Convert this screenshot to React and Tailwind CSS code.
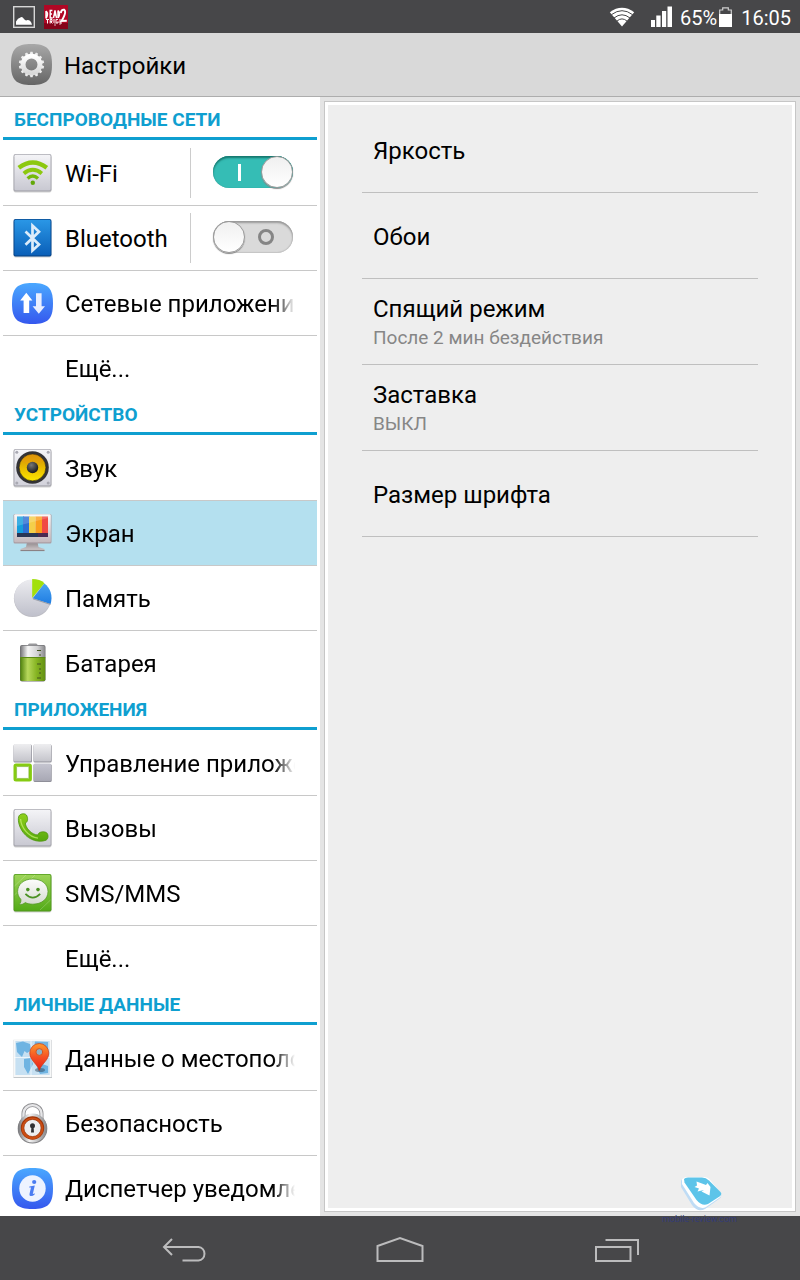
import { useState } from "react";

function Grad({ id, from, to, mid }) {
  return (
    <linearGradient id={id} x1="0" y1="0" x2="0" y2="1">
      <stop offset="0" stopColor={from} />
      {mid && <stop offset="0.5" stopColor={mid} />}
      <stop offset="1" stopColor={to} />
    </linearGradient>
  );
}

function Icon({ children }) {
  return (
    <svg viewBox="0 0 41 41" className="h-[41px] w-[41px] shrink-0" aria-hidden="true">
      {children}
    </svg>
  );
}

/* Light square tile shared by several icons */
function Tile({ id, from = "#f4f4f7", to = "#c9c9d2", edge = "#aaaab2" }) {
  return (
    <>
      <defs>
        <Grad id={id} from={from} to={to} />
      </defs>
      <rect x="1.5" y="2.5" width="38" height="37" rx="2" fill="#000" opacity="0.18" />
      <rect x="1.5" y="1" width="38" height="37.5" rx="2" fill={edge} />
      <rect x="2.5" y="1.8" width="36" height="35.5" rx="1.4" fill={`url(#${id})`} />
    </>
  );
}

const SQUIRCLE = "M20.5 0 C36 0 41 5 41 20.5 S36 41 20.5 41 S0 36 0 20.5 S5 0 20.5 0Z";

function WifiIcon() {
  return (
    <Icon>
      <Tile id="wifiTile" />
      <g fill="none" stroke="#8cc80f" strokeLinecap="butt">
        <path d="M6.8 14.8 Q20.8 4.4 34.8 14.8" strokeWidth="4.4" />
        <path d="M11.8 20.4 Q20.8 13 29.8 20.4" strokeWidth="3.9" />
        <path d="M15.6 25.4 Q20.8 20.8 26 25.4" strokeWidth="3.4" stroke="#74b90c" />
      </g>
      <circle cx="20.8" cy="29.8" r="2.2" fill="#63a80a" />
    </Icon>
  );
}

function BluetoothIcon() {
  return (
    <Icon>
      <Tile id="btTile" from="#2a97e6" to="#0a5fb8" edge="#07488f" />
      <path
        d="M13.5 13.5 L27 26.5 L20.5 32.4 V7.6 L27 13.8 L13.5 26.8"
        fill="none"
        stroke="#dcecfa"
        strokeWidth="2.7"
      />
    </Icon>
  );
}

function NetworkIcon() {
  return (
    <Icon>
      <defs>
        <Grad id="netBg" from="#4aa8ff" to="#3558ee" />
      </defs>
      <path d={SQUIRCLE} fill="url(#netBg)" />
      <path d="M14.3 9.8 L20.4 17.4 H17.2 V30 H11.6 V17.4 H8.2Z" fill="#fff" />
      <path d="M24 10.3 H29.6 V23.2 H33 L26.8 30.8 L20.6 23.2 H24Z" fill="#e9efff" />
    </Icon>
  );
}

function SoundIcon() {
  return (
    <Icon>
      <defs>
        <Grad id="cone" from="#cf8d05" mid="#e8ba00" to="#fbe600" />
        <radialGradient id="cap" cx="0.4" cy="0.3" r="0.8">
          <stop offset="0" stopColor="#777" />
          <stop offset="1" stopColor="#0c0c0c" />
        </radialGradient>
      </defs>
      <Tile id="sndTile" from="#f5f5f8" to="#d2d2db" />
      <g fill="#a9a9b2">
        <circle cx="4.8" cy="4.2" r="1.5" />
        <circle cx="36.2" cy="4.2" r="1.5" />
        <circle cx="4.8" cy="35" r="1.5" />
        <circle cx="36.2" cy="35" r="1.5" />
      </g>
      <circle cx="20.5" cy="19.5" r="16.3" fill="#333336" />
      <circle cx="20.5" cy="19.5" r="13.4" fill="url(#cone)" stroke="#1b1b1b" strokeWidth="0.6" />
      <path d="M20.5 19.5 L9.4 12.4 A13.2 13.2 0 0 1 31.6 12.4Z" fill="#ef9d10" opacity="0.4" />
      <circle cx="20.5" cy="19.5" r="5.7" fill="url(#cap)" />
    </Icon>
  );
}

function ScreenIcon() {
  return (
    <Icon>
      <defs>
        <Grad id="frame" from="#fafafb" to="#c4b9bd" />
        <Grad id="foot" from="#8d8588" to="#d5ced0" />
        <clipPath id="panel">
          <path d="M5 3.5 H36 V24 H5Z" />
        </clipPath>
      </defs>
      <path d="M15 29 H25.5 L26.5 34 L32.5 36 V38 H8.5 V36 L14 34Z" fill="url(#foot)" />
      <path d="M8.5 37.5 H32.5" stroke="#8b8285" strokeWidth="1.2" />
      <rect x="1.5" y="1" width="38" height="29.5" rx="1.5" fill="#aa9da3" />
      <rect x="2.2" y="1.2" width="36.6" height="28" rx="1.2" fill="url(#frame)" />
      <g clipPath="url(#panel)">
        <rect x="5" y="3" width="7" height="22" fill="#179edc" />
        <rect x="11" y="3" width="6.5" height="22" fill="#2f70d2" />
        <rect x="17" y="3" width="6.5" height="22" fill="#f4cf49" />
        <rect x="23.5" y="3" width="6.5" height="22" fill="#fa9d1d" />
        <rect x="30" y="3" width="7" height="22" fill="#f04a43" />
        <path d="M5 3 H36 V5 L5 13Z" fill="#fff" opacity="0.18" />
        <rect x="5" y="20" width="31" height="5" fill="#293554" />
        <rect x="26" y="20" width="10" height="5" fill="#5a2850" opacity="0.7" />
      </g>
    </Icon>
  );
}

function MemoryIcon() {
  return (
    <Icon>
      <defs>
        <Grad id="pie" from="#ececf0" to="#bfc0cb" />
        <Grad id="slice" from="#4aa3f2" to="#1f7de2" />
      </defs>
      <circle cx="20.5" cy="20.5" r="18.6" fill="#8f909b" opacity="0.6" />
      <circle cx="20.5" cy="19.8" r="18.4" fill="url(#pie)" />
      <path d="M20.2 20 V1 Q28 1 32.5 5.2Z" fill="#a2e00d" />
      <path d="M20.8 20.3 L32.3 5.6 C38.5 10 41 18 38.6 26Z" fill="url(#slice)" />
      <path d="M20.8 20.8 L38.6 26.5" stroke="#8c909c" strokeWidth="0.8" />
    </Icon>
  );
}

function BatteryIcon() {
  return (
    <Icon>
      <defs>
        <linearGradient id="cellTop" x1="0" x2="1">
          <stop offset="0" stopColor="#77777a" />
          <stop offset="0.3" stopColor="#f6f6f6" />
          <stop offset="0.7" stopColor="#d0d0d2" />
          <stop offset="1" stopColor="#8b8b8e" />
        </linearGradient>
        <linearGradient id="cell" x1="0" x2="1">
          <stop offset="0" stopColor="#4c7f0b" />
          <stop offset="0.3" stopColor="#b7d85c" />
          <stop offset="0.65" stopColor="#86b422" />
          <stop offset="1" stopColor="#628f12" />
        </linearGradient>
      </defs>
      <rect x="16" y="0.5" width="9.5" height="4" rx="1.5" fill="#99999c" />
      <rect x="8" y="2" width="25.5" height="36.5" rx="2" fill="#737377" />
      <rect x="8.6" y="2.8" width="24.3" height="14" rx="1.5" fill="url(#cellTop)" />
      <path d="M8.2 14.5 H33.3 V36.5 Q33.3 38 31.5 38 H10 Q8.2 38 8.2 36.5Z" fill="url(#cell)" />
      <path d="M8.2 14.5 H33.3" stroke="#5c8a15" />
      <path d="M25 7.5 H29 M27 12 H29 M25 21 H29 M27 26 H29 M27 30 H29 M25 35 H29" stroke="#42551f" strokeWidth="1" />
    </Icon>
  );
}

function AppsIcon() {
  return (
    <Icon>
      <defs>
        <Grad id="appA" from="#eeeef0" to="#c4c4cb" />
        <Grad id="appB" from="#c5c5d0" to="#a8a8b4" />
      </defs>
      <g fill="#8f8f99">
        <rect x="1.5" y="1.6" width="18.5" height="18" rx="1.5" />
        <rect x="21.5" y="1.6" width="18.2" height="18" rx="1.5" />
        <rect x="21.5" y="21" width="18.2" height="18" rx="1.5" />
      </g>
      <rect x="1.5" y="1" width="17.8" height="17.5" rx="1.5" fill="url(#appA)" />
      <rect x="21.5" y="1" width="17.6" height="17.5" rx="1.5" fill="url(#appA)" />
      <rect x="21.5" y="20.6" width="17.6" height="17.4" rx="1.5" fill="url(#appB)" />
      <rect x="3" y="22" width="15.4" height="15" rx="1" fill="#fff" stroke="#86cb12" strokeWidth="3" />
      <rect x="4.6" y="23.6" width="12.2" height="11.8" rx="0.8" fill="none" stroke="#6ca71b" strokeWidth="0.5" />
    </Icon>
  );
}

function PhoneIcon() {
  return (
    <Icon>
      <defs>
        <Grad id="handset" from="#8fd01b" to="#56a80d" />
      </defs>
      <Tile id="phoneTile" />
      <path
        d="M6.6 9 C7.2 5.6 12.6 4.8 14.4 7 C16.2 9.8 16 14 13.4 15 C13.2 19.6 19.8 27 26 27 C26.4 23.8 31.4 23 34.4 24.6 C36.8 26.6 36.4 31 34 32.2 C27.4 34.8 17.4 32.7 11.3 24.6 C7 18.9 5.8 12.8 6.6 9Z"
        fill="url(#handset)"
        stroke="#4c930c"
        strokeWidth="0.8"
      />
      <path d="M8.6 11 C9 19 16 29 26 30.2" fill="none" stroke="#c6f06e" strokeWidth="1.3" opacity="0.75" />
    </Icon>
  );
}

function SmsIcon() {
  return (
    <Icon>
      <defs>
        <Grad id="bubble" from="#fdfdfc" to="#d5dbd0" />
      </defs>
      <Tile id="smsTile" from="#9cd457" to="#54ab18" edge="#529c1c" />
      <path d="M2.5 13 L14 2 M2.5 22 L23 2 M28 37 L38.5 27" stroke="#fff" opacity="0.2" />
      <path
        d="M20.8 6 C30 6 36 11.4 36 18.6 C36 26 29.8 31.2 20.8 31.2 C18 31.2 15.4 30.7 13.3 29.6 C11.7 31 9.6 31.8 7 31.6 C8.7 30 9.2 28.2 8.8 26.3 C6.8 24.2 5.6 21.6 5.6 18.6 C5.6 11.4 11.6 6 20.8 6Z"
        fill="url(#bubble)"
        stroke="#579b28"
        strokeWidth="0.8"
      />
      <circle cx="15.8" cy="16.6" r="1.8" fill="#4a9222" />
      <circle cx="26" cy="16.6" r="1.8" fill="#4a9222" />
      <path d="M13.4 20.8 Q20.8 28.4 28.2 20.8" fill="none" stroke="#4a9222" strokeWidth="1.7" />
    </Icon>
  );
}

function LocationIcon() {
  return (
    <Icon>
      <defs>
        <Grad id="pin" from="#ff9a2b" mid="#f55125" to="#e51f18" />
      </defs>
      <rect x="1.5" y="2" width="38.5" height="38" fill="#c3c7ca" />
      <rect x="1.5" y="1" width="38" height="38" fill="#f7f8f8" />
      <rect x="3.4" y="3" width="34.3" height="34" fill="#c6e0f2" />
      <path d="M4 5 L11 3.5 L18 6 L20 12 L15 15 L12.5 13 L10 19 L5 14Z M12 21 L19 20 L21 26 L16 36 L12 29Z M23 3.5 L36 4 V17 L29 14 L25 17 L22 10Z M25 30 L30 26 L36 28 V35 L28 36Z" fill="#6fb4e2" />
      <path d="M19 2 V38 M2 19.5 H38" stroke="#fff" strokeWidth="1" opacity="0.65" />
      <ellipse cx="28" cy="32" rx="5" ry="2" fill="#2b4459" opacity="0.5" />
      <path d="M27.3 32.5 C25.4 25.8 17.8 22.5 17.8 15 A9.5 9.5 0 0 1 36.8 15 C36.8 22.5 29.2 25.8 27.3 32.5Z" fill="url(#pin)" stroke="#c93a14" strokeWidth="0.7" />
      <circle cx="27.3" cy="14" r="3.4" fill="#8ab2c9" stroke="#d9531c" />
    </Icon>
  );
}

function LockIcon() {
  return (
    <Icon>
      <defs>
        <linearGradient id="steel" x1="0" x2="1">
          <stop offset="0" stopColor="#77777a" />
          <stop offset="0.4" stopColor="#f4f4f4" />
          <stop offset="1" stopColor="#858588" />
        </linearGradient>
      </defs>
      <path d="M11.5 17 V10.5 A9 8.4 0 0 1 29.5 10.5 V17" fill="none" stroke="#8e8e91" strokeWidth="4" />
      <path d="M11.5 17 V10.5 A9 8.4 0 0 1 29.5 10.5 V17" fill="none" stroke="#e6e6e8" strokeWidth="2.4" />
      <circle cx="20.5" cy="25.8" r="14.8" fill="#808083" />
      <circle cx="20.5" cy="25" r="14.5" fill="url(#steel)" />
      <circle cx="20.5" cy="25" r="11.7" fill="#9d3509" />
      <circle cx="20.5" cy="25.4" r="10.8" fill="#cd4d12" />
      <circle cx="20.5" cy="25" r="8.6" fill="#eeeef0" stroke="#97370b" strokeWidth="0.7" />
      <circle cx="20.5" cy="22.8" r="2.5" fill="#303033" />
      <path d="M19.5 23 H21.5 L22 29.4 H19Z" fill="#303033" />
    </Icon>
  );
}

function InfoIcon() {
  return (
    <Icon>
      <defs>
        <Grad id="infoBg" from="#4aa8ff" to="#3558ee" />
      </defs>
      <path d={SQUIRCLE} fill="url(#infoBg)" />
      <circle cx="20.5" cy="20.5" r="13.2" fill="#edf3ff" />
      <circle cx="22.2" cy="14" r="2.1" fill="#4a7cf2" />
      <path d="M17.4 18.6 L22.8 17.6 L20.8 26 Q21.8 26 22.8 25.2 L22.6 26.4 Q20.6 28.4 18.4 28 Q17 27.6 17.6 25.4 L19 19.6 L17.2 19.6Z" fill="#4a7cf2" />
    </Icon>
  );
}

function GearIcon() {
  const teeth = Array.from({ length: 14 }, (_, i) => i * (360 / 14));
  return (
    <Icon>
      <defs>
        <Grad id="gearBg" from="#a8a8a8" to="#656565" />
        <Grad id="gearFg" from="#ffffff" to="#d9d9d9" />
      </defs>
      <path d={SQUIRCLE} fill="url(#gearBg)" />
      {teeth.map((a) => (
        <path key={a} d="M18.4 12 L19.4 7.8 H21.6 L22.6 12Z" fill="#ededed" transform={`rotate(${a} 20.5 20.5)`} />
      ))}
      <circle cx="20.5" cy="20.5" r="8.4" fill="none" stroke="url(#gearFg)" strokeWidth="4.8" />
    </Icon>
  );
}

const sections = [
  {
    title: "БЕСПРОВОДНЫЕ СЕТИ",
    items: [
      { label: "Wi-Fi", icon: WifiIcon, toggle: true, on: true },
      { label: "Bluetooth", icon: BluetoothIcon, toggle: true, on: false },
      { label: "Сетевые приложения", icon: NetworkIcon },
      { label: "Ещё..." },
    ],
  },
  {
    title: "УСТРОЙСТВО",
    items: [
      { label: "Звук", icon: SoundIcon },
      { label: "Экран", icon: ScreenIcon, active: true },
      { label: "Память", icon: MemoryIcon },
      { label: "Батарея", icon: BatteryIcon },
    ],
  },
  {
    title: "ПРИЛОЖЕНИЯ",
    items: [
      { label: "Управление приложениями", icon: AppsIcon },
      { label: "Вызовы", icon: PhoneIcon },
      { label: "SMS/MMS", icon: SmsIcon },
      { label: "Ещё..." },
    ],
  },
  {
    title: "ЛИЧНЫЕ ДАННЫЕ",
    items: [
      { label: "Данные о местоположении", icon: LocationIcon },
      { label: "Безопасность", icon: LockIcon },
      { label: "Диспетчер уведомлений", icon: InfoIcon },
    ],
  },
];

const options = [
  { title: "Яркость" },
  { title: "Обои" },
  { title: "Спящий режим", summary: "После 2 мин бездействия" },
  { title: "Заставка", summary: "ВЫКЛ" },
  { title: "Размер шрифта" },
];

function Toggle({ label, initial }) {
  const [on, setOn] = useState(initial);
  return (
    <div className="flex h-[50px] w-[127px] shrink-0 items-center border-l border-[#cccccc] pl-[22px]">
      <label className="relative mb-0.5 flex h-8 w-20 cursor-pointer items-center">
        <input
          type="checkbox"
          role="switch"
          aria-label={label}
          checked={on}
          onChange={() => setOn(!on)}
          className="peer h-8 w-20 cursor-pointer appearance-none rounded-full bg-[#dadada] shadow-[inset_0_2px_2px_#9a9a9a,inset_0_0_1px_1px_#c4c4c4] checked:bg-[#35bdb5] checked:shadow-[inset_0_2px_2px_#16786f,inset_0_0_1px_#258f88]"
        />
        <span className="absolute left-0 h-8 w-8 rounded-full border border-[#9a9a9a] bg-linear-to-b from-[#f0f0f0] to-white shadow-[0_1px_1px_#888888] peer-checked:left-12" />
        {on ? (
          <span className="absolute left-[25px] h-[17px] w-[3px] bg-white" />
        ) : (
          <span className="absolute left-[45px] h-4 w-4 rounded-full border-3 border-[#858585]" />
        )}
      </label>
    </div>
  );
}

function MenuRow({ item }) {
  const RowIcon = item.icon;
  return (
    <li className={item.active ? "flex items-center bg-[#b4e0ef]" : "flex items-center"}>
      <a
        href="#"
        aria-current={item.active ? "page" : undefined}
        className="flex h-16 min-w-0 flex-1 items-center gap-3 pl-[9px]"
      >
        <span className="flex w-[41px] shrink-0">{RowIcon && <RowIcon />}</span>
        <span
          className={
            item.toggle
              ? "pt-0.5 whitespace-nowrap"
              : "mr-[22px] flex-1 overflow-hidden pt-0.5 whitespace-nowrap mask-[linear-gradient(to_right,black_calc(100%-22px),transparent)]"
          }
        >
          {item.label}
        </span>
      </a>
      {item.toggle && <Toggle label={item.label} initial={item.on} />}
    </li>
  );
}

function StatusBar() {
  return (
    <div className="flex h-[33px] shrink-0 items-center bg-[#474749] pr-[9px] pl-[13px] text-[20px] text-white">
      <svg viewBox="0 0 22 22" className="h-[22px] w-[22px]" aria-hidden="true">
        <rect x="0.7" y="0.7" width="20.6" height="20.6" fill="none" stroke="#d6d6d6" strokeWidth="1.4" />
        <path d="M3 18.8 V15.5 Q5 12 7 11.8 Q9 9.5 11 13 Q12.5 15.2 14.5 14 Q18 14 19 18.8Z" fill="#fff" />
      </svg>
      <svg viewBox="0 0 24 24" className="ml-[9px] h-6 w-6" aria-hidden="true">
        <rect width="24" height="24" fill="#b00725" />
        <rect y="18" width="24" height="6" fill="#85041a" />
        <g fill="none" stroke="#fff" strokeWidth="1.4">
          <path d="M2 6 V13.5 M2 6 Q5 8 2.2 13.5 M8.4 5.5 H6.2 V13 H8.6 M6 9 H8 M9.5 13 L11 5.5 L12.5 13 M10 10 H12 M14 5.5 V13 M14 5.5 Q17 8 14.2 13" />
          <path d="M2 14.5 H5 M3.5 14.5 V18.5 M6.2 18.5 V14.5 H8 V16.5 H6.5 L8.4 18.5 M10 14 V18 M14 14.4 H12 V18 H14 V16.3 M16 14 V18 H18" strokeWidth="1" />
          <path d="M16.8 8 Q17.5 4.2 20.2 4.8 Q23 7 17.5 16 L22.8 15.8" strokeWidth="2" />
          <path d="M11 18 V21 M16 18 V20" strokeWidth="0.7" />
        </g>
      </svg>
      <div className="ml-auto flex items-center">
        <svg viewBox="0 0 26 20" className="h-5 w-[26px]" aria-hidden="true">
          <path d="M0.8 5.2 Q13 -3.6 25.2 5.2 L13 19.4Z" fill="#fff" />
          <g fill="none" stroke="#474749" strokeWidth="1">
            <path d="M2.5 7.6 Q13 -0.2 23.5 7.6" />
            <path d="M5 11 Q13 4.6 21 11" />
            <path d="M7.8 14.2 Q13 9.6 18.2 14.2" />
          </g>
        </svg>
        <svg viewBox="0 0 21 21" className="ml-4 h-[21px] w-[21px]" aria-hidden="true">
          <path d="M0 14 H4 V21 H0Z M5.3 9.5 H9.6 V21 H5.3Z M11 5 H15.2 V21 H11Z M16.5 0.5 H21 V21 H16.5Z" fill="#fff" />
        </svg>
        <span className="ml-2 pt-0.5">65%</span>
        <svg viewBox="0 0 13 20" className="ml-0.5 h-5 w-[13px]" aria-hidden="true">
          <path d="M0.7 7 V3 H3.7 V0.8 H9.3 V3 H12.3 V7" fill="none" stroke="#cfcfcf" strokeWidth="1.2" />
          <rect y="7" width="13" height="13" fill="#fff" />
        </svg>
        <span className="ml-[9px] pt-0.5">16:05</span>
      </div>
    </div>
  );
}

function NavBar() {
  const cls = "flex h-16 w-[216px] items-center justify-center pt-1";
  const svg = "h-7 w-[50px] fill-none stroke-[#bcbcbd] stroke-2";
  return (
    <nav className="flex shrink-0 justify-center bg-[#474749]">
      <button type="button" aria-label="Назад" className={cls}>
        <svg viewBox="0 0 50 28" className={svg}>
          <path d="M13 3 L5 11 L13 19 M5 11 H39.5 A6.8 6.8 0 0 1 39.5 24.5 H23.5" />
        </svg>
      </button>
      <button type="button" aria-label="Домой" className={cls}>
        <svg viewBox="0 0 50 28" className={svg}>
          <path d="M2.5 25 V10 L25 2 L47.5 10 V25Z" />
        </svg>
      </button>
      <button type="button" aria-label="Недавние приложения" className={cls}>
        <svg viewBox="0 0 50 28" className={svg}>
          <path d="M5 11 H39.5 V25 H5Z M14.5 4 H47 V19" />
        </svg>
      </button>
    </nav>
  );
}

export default function App() {
  return (
    <div className="relative flex h-screen flex-col overflow-hidden bg-white font-[Roboto,sans-serif] text-[24px] leading-8 text-black">
      <StatusBar />
      <header className="flex h-16 shrink-0 items-center gap-3 border-b border-[#adadad] bg-[#d9d9d9] pl-[11px]">
        <GearIcon />
        <h1 className="pt-0.5">Настройки</h1>
      </header>
      <div className="flex min-h-0 flex-1">
        <aside className="w-2/5 shrink-0 overflow-hidden px-[3px] pt-2">
          {sections.map((s) => (
            <section key={s.title}>
              <h2 className="mb-px h-[35px] border-b-3 border-[#0f9fd0] pl-[11px] text-[19px] leading-[30px] font-bold text-[#0f9fd0]">
                {s.title}
              </h2>
              <ul className="divide-y divide-[#c8c8c8]">
                {s.items.map((item) => (
                  <MenuRow key={item.label} item={item} />
                ))}
              </ul>
            </section>
          ))}
        </aside>
        <main className="flex min-w-0 flex-1 bg-[#e4e4e4] p-1">
          <div className="flex-1 border border-[#c6c6c6] bg-[#eeeeee]">
            <div className="h-full border-3 border-white px-[34px] pt-0.5">
              {options.map((o) => (
                <button
                  key={o.title}
                  type="button"
                  className={
                    o.summary
                      ? "flex h-[86px] w-full flex-col items-start justify-center border-b border-[#bfbfbf] pl-[11px] text-left"
                      : "flex h-[86px] w-full items-center border-b border-[#bfbfbf] pt-0.5 pl-[11px] text-left"
                  }
                >
                  <span>{o.title}</span>
                  {o.summary && <span className="text-[19px] leading-[26px] text-[#868686]">{o.summary}</span>}
                </button>
              ))}
            </div>
          </div>
        </main>
      </div>
      <NavBar />
      <div className="pointer-events-none absolute right-[63px] bottom-[53px] flex flex-col items-center">
        <svg viewBox="0 0 42 34" className="ml-1 h-[34px] w-[42px]" aria-hidden="true">
          <path d="M1 4 Q2 1 6 1 H24 Q28 1 31 5 L41 17 Q42 20 39 22 L25 32 Q18 36 12 28 L1 10Z" fill="#bfdcf5" />
          <path d="M2 2 Q4 0 8 0 H24 Q28 0 31 4 L41 16 Q42 19 39 21 L26 30 Q20 33 14 26 L2 7Z" fill="#fff" />
          <path d="M4 2 Q5 0.5 8 0.5 H22 Q26 0.5 29 3.5 L40.5 15 Q42.5 17.5 39.5 19.5 L28 27 Q22 29.5 16.5 23 L4.5 5.5Z" fill="#5dc4e9" />
          <path d="M16.5 4.5 L26 8 L27.5 6 L30.5 10 L29.5 18.5 L21.5 14.5 L24 13 L17.5 14.5 L19 11.5 L14.5 10 L17 8.5Z" fill="#fff" />
        </svg>
        <span className="text-[9px] leading-4 text-[#333b78]">mobile-review.com</span>
      </div>
    </div>
  );
}
